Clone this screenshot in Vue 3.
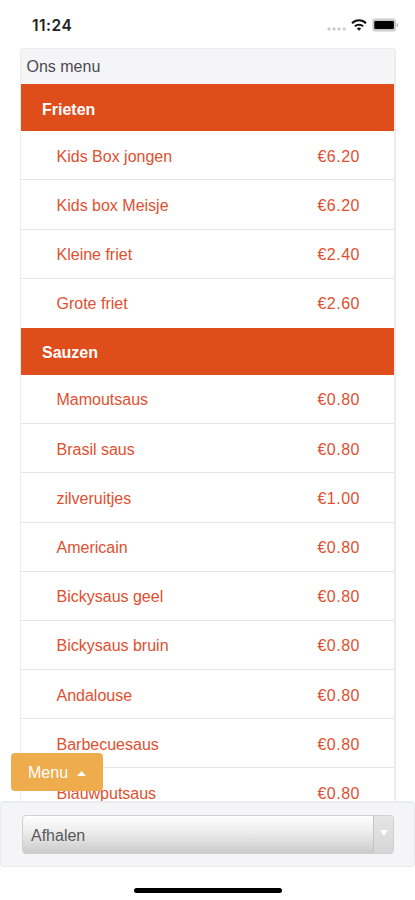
<script setup>
const groups = [
  {
    name: 'Frieten',
    items: [
      ['Kids Box jongen', '€6.20'],
      ['Kids box Meisje', '€6.20'],
      ['Kleine friet', '€2.40'],
      ['Grote friet', '€2.60'],
    ],
  },
  {
    name: 'Sauzen',
    items: [
      ['Mamoutsaus', '€0.80'],
      ['Brasil saus', '€0.80'],
      ['zilveruitjes', '€1.00'],
      ['Americain', '€0.80'],
      ['Bickysaus geel', '€0.80'],
      ['Bickysaus bruin', '€0.80'],
      ['Andalouse', '€0.80'],
      ['Barbecuesaus', '€0.80'],
      ['Blauwputsaus', '€0.80'],
    ],
  },
]
</script>

<template>
  <div class="screen">
    <header class="status">
      <span class="time">11:24</span>
      <div class="indicators">
        <svg class="signal" width="20" height="4" viewBox="0 0 20 4">
          <g fill="#cacaca">
            <rect x="0.5" y="0.5" width="3" height="3" rx="1" />
            <rect x="5.5" y="0.5" width="3" height="3" rx="1" />
            <rect x="10.5" y="0.5" width="3" height="3" rx="1" />
            <rect x="15.7" y="0.5" width="3" height="3" rx="1" />
          </g>
        </svg>
        <svg class="wifi" width="16" height="12" viewBox="0 0 16 12">
          <g fill="none" stroke="#111" stroke-width="2">
            <path d="M1 4.3C5 .3 11 .3 15 4.3" />
            <path d="M3.9 7.3c2.3-2.2 5.9-2.2 8.2 0" />
          </g>
          <path d="M5.8 9.4c1.2-1.1 3.2-1.1 4.4 0L8 11.7z" fill="#111" />
        </svg>
        <svg class="battery" width="27" height="14" viewBox="0 0 27 14">
          <rect x="0.3" y="0.5" width="23.7" height="13" rx="3" fill="#cbcbcb" />
          <rect x="2.3" y="3" width="19.6" height="8" rx="1" fill="#000" />
          <path d="M24.7 5v4c1.8-.8 1.8-3.2 0-4z" fill="#aaa" />
        </svg>
      </div>
    </header>

    <main class="panel">
      <div class="panel-title">Ons menu</div>
      <section v-for="group in groups" :key="group.name">
        <h2 class="group">{{ group.name }}</h2>
        <ul class="items">
          <li v-for="[name, price] in group.items" :key="name" class="item">
            <span>{{ name }}</span><span class="price">{{ price }}</span>
          </li>
        </ul>
      </section>
    </main>

    <button class="menu-button">
      Menu
      <svg width="9" height="5" viewBox="0 0 9 5"><path d="M0 5 4.5 0 9 5z" fill="#fff" /></svg>
    </button>

    <footer class="bottom">
      <div class="bar">
        <div class="select">
          <span class="value">Afhalen</span>
          <span class="arrow">
            <svg width="8" height="6" viewBox="0 0 8 6"><path d="M0 0h8L4 6z" fill="#fff" /></svg>
          </span>
        </div>
      </div>
      <div class="home"></div>
    </footer>
  </div>
</template>

<style>
body {
  background: #fff;
}
</style>

<style scoped>
.screen {
  position: relative;
  display: flex;
  flex-direction: column;
  width: 415px;
  height: 900px;
  overflow: hidden;
  box-sizing: border-box;
  background: #fff;
  font: 16px/20px "Liberation Sans", Arial, sans-serif;
}
.status {
  flex: none;
  display: flex;
  justify-content: space-between;
  height: 48px;
  padding: 0 16px 0 32px;
  box-sizing: border-box;
}
.time {
  padding-top: 16px;
  font: 600 15.5px/20px Inter, sans-serif;
  letter-spacing: 0.5px;
  color: #222;
}
.indicators {
  display: flex;
  align-items: flex-start;
}
.signal {
  margin: 27px 4px 0 0;
}
.wifi {
  margin: 19px 5px 0 0;
}
.battery {
  margin-top: 18px;
}
.panel {
  flex: 1;
  min-height: 0;
  overflow: hidden;
  margin: 0 19px 0 20px;
  border: solid #ebecec;
  border-width: 1px 2px 0 1px;
  border-radius: 4px 4px 0 0;
}
.panel-title {
  height: 35.2px;
  padding: 8px 5.5px 0;
  box-sizing: border-box;
  background: #f5f5f7;
  color: #4b4b4d;
}
.group {
  height: 47px;
  margin: 0;
  padding: 15.5px 21px 0;
  box-sizing: border-box;
  background: #df4d1b;
  color: #fff;
  font-size: 16px;
  line-height: 20px;
}
.items {
  margin: 0;
  padding: 0;
  list-style: none;
}
.item {
  display: flex;
  justify-content: space-between;
  height: 49.2px;
  padding: 15.5px 34px 0 35.5px;
  box-sizing: border-box;
  border-bottom: 1px solid #e6e6e7;
  color: #df502f;
}
.item:last-child {
  border-bottom: 0;
}
.price {
  letter-spacing: 0.5px;
}
.menu-button {
  position: absolute;
  left: 11px;
  top: 753px;
  display: flex;
  align-items: center;
  gap: 9px;
  width: 92px;
  height: 38px;
  padding: 2px 0 0 17px;
  border: 0;
  border-radius: 4px;
  background: #efac4d;
  color: #fff;
  font: inherit;
}
.bottom {
  flex: none;
  height: 99px;
  background: #fff;
}
.bar {
  height: 66px;
  padding: 12px 20px 0 21px;
  box-sizing: border-box;
  border: 2px solid #eaebed;
  border-width: 2px 1px 1.5px;
  border-radius: 4px;
  background: #f5f5f8;
}
.select {
  display: flex;
  height: 39px;
  box-sizing: border-box;
  border: 1px solid #cfcfcf;
  border-radius: 4px;
  overflow: hidden;
  background: linear-gradient(#fefefe, #ececec 45%, #cbcbcb);
}
.value {
  flex: 1;
  padding: 10px 8px 0;
  color: #58585a;
}
.arrow {
  display: flex;
  align-items: center;
  justify-content: center;
  width: 20px;
  padding-bottom: 4px;
  box-sizing: border-box;
  border-left: 1px solid #c4c4c4;
  background: linear-gradient(#e5e5e5, #d6d6d6);
}
.home {
  width: 148px;
  height: 5px;
  margin: 21px 0 0 134px;
  border-radius: 3px;
  background: #000;
}
</style>
